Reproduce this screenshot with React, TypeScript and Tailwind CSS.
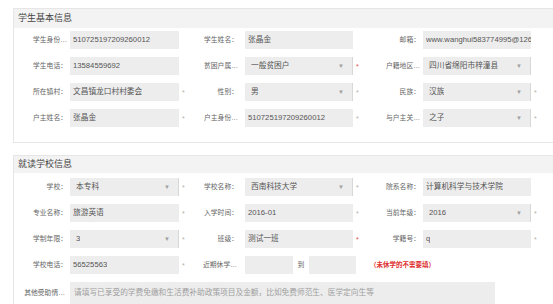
import React from "react";

type Kind = "text" | "select";
type Mark = "none" | "gray" | "red";

const FONT = "font-['Liberation_Sans','Noto_Sans_CJK_SC',sans-serif]";

function MarkCell({ mark, w }: { mark: Mark; w: string }) {
  return (
    <span className={`${w} flex items-center pl-[3px] text-[7px] leading-none`}>
      {mark === "gray" && <span className="text-[#b0b0b0]">*</span>}
      {mark === "red" && <span className="text-[#e24b4b]">*</span>}
    </span>
  );
}

function Input({ value, kind, w }: { value: string; kind: Kind; w: string }) {
  return (
    <div
      className={`${w} h-[18px] bg-[#ededed] flex items-center overflow-hidden whitespace-nowrap text-[7.7px] text-[#555] ${
        kind === "select" ? "pl-[6px] pr-[8px] justify-between border-r border-[#d8d8d8]" : "pl-[3px]"
      }`}
    >
      <span className="overflow-hidden">{value}</span>
      {kind === "select" && <span className="text-[6px] text-[#a0a0a0] leading-none">▼</span>}
    </div>
  );
}

function Field({
  label,
  value,
  kind = "text",
  mark = "none",
  lw,
  gap,
  iw,
  mw,
}: {
  label: string;
  value: string;
  kind?: Kind;
  mark?: Mark;
  lw: string;
  gap: string;
  iw: string;
  mw: string;
}) {
  return (
    <div className="flex items-center">
      <span className={`${lw} ${gap} text-right text-[6.8px] text-[#666] whitespace-nowrap`}>{label}</span>
      <Input value={value} kind={kind} w={iw} />
      <MarkCell mark={mark} w={mw} />
    </div>
  );
}

type F = { label: string; value: string; kind?: Kind; mark?: Mark };

function Row({ cols }: { cols: F[] }) {
  const specs = [
    { lw: "w-[56px]", gap: "pr-[3px]", iw: "w-[109px]", mw: "w-[10px]" },
    { lw: "w-[56px]", gap: "pr-[7px]", iw: "w-[108px]", mw: "w-[10px]" },
    { lw: "w-[60px]", gap: "pr-[3px]", iw: "w-[108px]", mw: "w-[9px]" },
  ];
  return (
    <div className="flex">
      {cols.map((c, i) => (
        <Field key={i} {...c} {...specs[i]} />
      ))}
    </div>
  );
}

function Header({ title, h }: { title: string; h: string }) {
  return (
    <div className={`${h} bg-[#f3f3f3] flex items-center pl-[4px] text-[9px] text-[#444]`}>{title}</div>
  );
}

export default function App() {
  return (
    <div className={`w-[553px] h-[304px] overflow-hidden bg-white ${FONT}`}>
      <div className="pl-[13px] pt-[8px]">
        {/* Section 1 */}
        <div className="w-[560px] border border-[#e6e6e6]">
          <Header title="学生基本信息" h="h-[19px]" />
          <div className="pt-[3px] pb-[15px] flex flex-col gap-[8px]">
            <Row
              cols={[
                { label: "学生身份…", value: "510725197209260012" },
                { label: "学生姓名：", value: "张晶金" },
                { label: "邮箱：", value: "www.wanghui583774995@126.com" },
              ]}
            />
            <Row
              cols={[
                { label: "学生电话：", value: "13584559692" },
                { label: "贫困户属…", value: "一般贫困户", kind: "select", mark: "red" },
                { label: "户籍地区…", value: "四川省绵阳市梓潼县", kind: "select" },
              ]}
            />
            <Row
              cols={[
                { label: "所在镇村：", value: "文昌镇龙口村村委会", mark: "gray" },
                { label: "性别：", value: "男", kind: "select", mark: "gray" },
                { label: "民族：", value: "汉族", kind: "select", mark: "gray" },
              ]}
            />
            <Row
              cols={[
                { label: "户主姓名：", value: "张晶金", mark: "gray" },
                { label: "户主身份…", value: "510725197209260012", mark: "gray" },
                { label: "与户主关…", value: "之子", kind: "select", mark: "gray" },
              ]}
            />
          </div>
        </div>

        {/* Section 2 */}
        <div className="w-[560px] mt-[12px] border border-[#e6e6e6]">
          <Header title="就读学校信息" h="h-[17px]" />
          <div className="pt-[5px] pb-[16px] flex flex-col gap-[8px]">
            <Row
              cols={[
                { label: "学校：", value: "本专科", kind: "select", mark: "gray" },
                { label: "学校名称：", value: "西南科技大学", kind: "select", mark: "gray" },
                { label: "院系名称：", value: "计算机科学与技术学院" },
              ]}
            />
            <Row
              cols={[
                { label: "专业名称：", value: "旅游英语", mark: "gray" },
                { label: "入学时间：", value: "2016-01", mark: "gray" },
                { label: "当前年级：", value: "2016", kind: "select", mark: "gray" },
              ]}
            />
            <Row
              cols={[
                { label: "学制年限：", value: "3", kind: "select", mark: "gray" },
                { label: "班级：", value: "测试一班", mark: "red" },
                { label: "学籍号：", value: "q", mark: "gray" },
              ]}
            />
            <div className="flex items-center">
              <Field label="学校电话：" value="56525563" mark="gray" lw="w-[56px]" gap="pr-[3px]" iw="w-[109px]" mw="w-[10px]" />
              <span className="w-[56px] pr-[8px] text-right text-[6.8px] text-[#666] whitespace-nowrap">近期休学…</span>
              <Input value="" kind="text" w="w-[48px]" />
              <span className="w-[16px] text-center text-[6.8px] text-[#666]">到</span>
              <Input value="" kind="text" w="w-[47px]" />
              <span className="ml-[14px] text-[6.5px] font-semibold text-[#e03030] whitespace-nowrap">（未休学的不需要填）</span>
            </div>
            <div className="flex items-center">
              <span className="w-[56px] pr-[5px] text-right text-[6.8px] text-[#666] whitespace-nowrap">其他受助情…</span>
              <div className="w-[425px] h-[22px] bg-[#ededed] flex items-center pl-[4px] text-[7.7px] text-[#a0a0a0] whitespace-nowrap overflow-hidden">
                请填写已享受的学费免缴和生活费补助政策项目及金额，比如免费师范生、医学定向生等
              </div>
            </div>
          </div>
        </div>
      </div>
    </div>
  );
}
